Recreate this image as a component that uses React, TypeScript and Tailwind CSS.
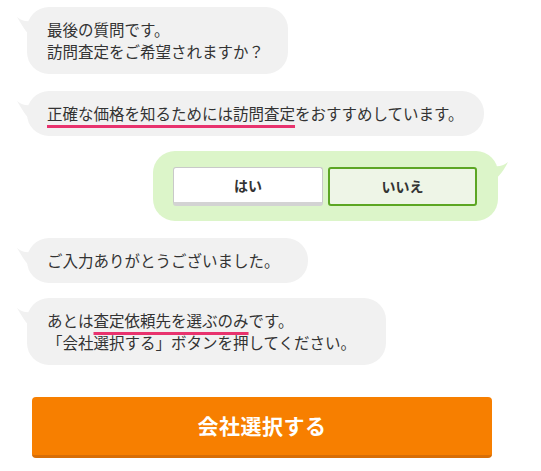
import React from "react";

const jp = '"Noto Sans CJK JP", "Noto Sans", sans-serif';

function TailLeft({ color }: { color: string }) {
  return (
    <svg
      className="absolute left-[-11px] top-[6px]"
      width="16"
      height="24"
      viewBox="0 0 16 24"
    >
      <path d="M1 4 C6 8 10 9 16 8 L16 24 C10 20 6 12 1 4 Z" fill={color} />
    </svg>
  );
}

function TailRight({ color }: { color: string }) {
  return (
    <svg
      className="absolute right-[-11px] top-[6px]"
      width="16"
      height="24"
      viewBox="0 0 16 24"
    >
      <path d="M15 5 C10 9 6 10 0 9 L0 24 C6 20 11 13 15 5 Z" fill={color} />
    </svg>
  );
}

function Bubble({ children, className = "" }: { children: React.ReactNode; className?: string }) {
  return (
    <div
      className={`relative rounded-[22px] bg-[#f1f1f1] pl-5 pr-6 pt-[11px] pb-[12px] text-[15.5px] leading-[22px] text-[#333] ${className}`}
    >
      <TailLeft color="#f1f1f1" />
      {children}
    </div>
  );
}

function Mark({ children }: { children: React.ReactNode }) {
  return (
    <span className="underline decoration-[#e8336e] decoration-[3px] underline-offset-[5px] [text-decoration-skip-ink:none]">
      {children}
    </span>
  );
}

export default function App() {
  return (
    <div
      className="w-[541px] h-[471px] bg-white flex flex-col items-start pt-[7px] pl-[27px] overflow-hidden"
      style={{ fontFamily: jp }}
    >
      {/* question */}
      <Bubble>
        最後の質問です。
        <br />
        訪問査定をご希望されますか？
      </Bubble>

      <Bubble className="mt-[17px] pr-[20px]">
        <Mark>正確な価格を知るためには訪問査定</Mark>をおすすめしています。
      </Bubble>

      {/* answer */}
      <div className="relative self-end mr-[43px] mt-[15px] rounded-[22px] bg-[#dcf5c9] pl-5 pr-[21px] pt-4 pb-[15px] flex gap-[5px]">
        <TailRight color="#dcf5c9" />
        <button className="w-[150px] h-[39px] rounded-[3px] bg-white border border-[#c9c9c9] border-b-[4px] border-b-[#d3d3d3] text-[14px] font-bold text-[#333]">
          はい
        </button>
        <button className="w-[149px] h-[39px] rounded-[3px] bg-[#eef5e7] border-2 border-[#5ca623] text-[14px] font-bold text-[#333]">
          いいえ
        </button>
      </div>

      <Bubble className="mt-[17px] pr-[28px]">ご入力ありがとうございました。</Bubble>

      <Bubble className="mt-[15px] pr-[30px]">
        あとは<Mark>査定依頼先を選ぶのみ</Mark>です。
        <br />
        「会社選択する」ボタンを押してください。
      </Bubble>

      {/* cta */}
      <button className="mt-[32px] ml-[5px] w-[460px] h-[61px] rounded-[4px] bg-[#f77f00] border-b-[3px] border-b-[#d86e06] text-white text-[21px] font-bold tracking-[0.5px]">
        会社選択する
      </button>
    </div>
  );
}
